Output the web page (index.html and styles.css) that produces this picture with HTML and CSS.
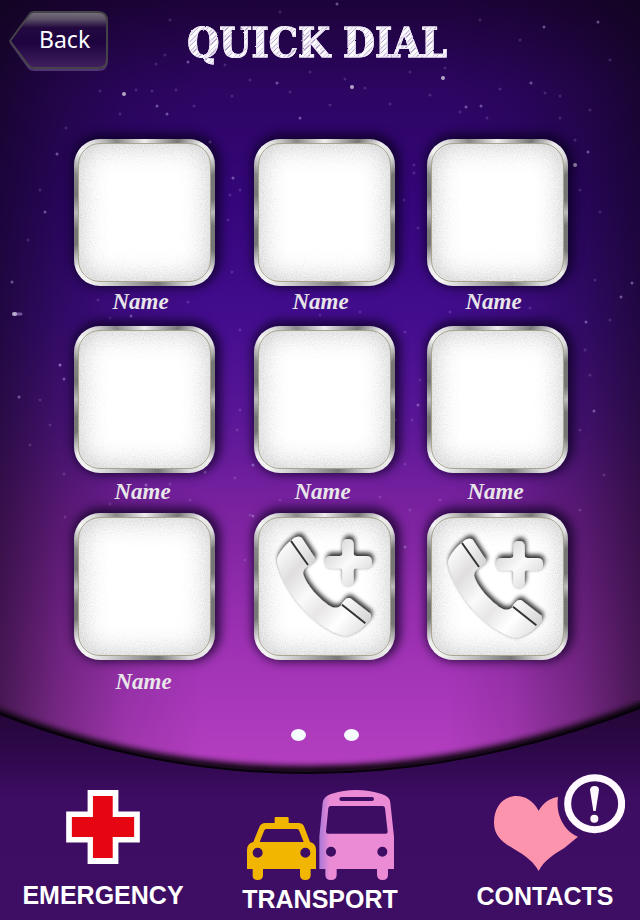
FILE: index.html
```html
<!DOCTYPE html>
<html lang="en">
<head>
<meta charset="utf-8">
<meta name="viewport" content="width=device-width, initial-scale=1">
<title>Quick Dial</title>
<link rel="stylesheet" href="styles.css">
</head>
<body>
<svg class="defs" aria-hidden="true">
  <defs>
    <filter id="grain" x="0" y="0" width="100%" height="100%">
      <feTurbulence type="fractalNoise" baseFrequency="0.9" numOctaves="2" seed="4" result="n"/>
      <feDisplacementMap in="SourceGraphic" in2="n" scale="26" xChannelSelector="R" yChannelSelector="G"/>
    </filter>
    <filter id="chalk">
      <feTurbulence type="fractalNoise" baseFrequency="0.5" numOctaves="2" seed="8" result="n"/>
      <feDisplacementMap in="SourceGraphic" in2="n" scale="2" xChannelSelector="R" yChannelSelector="G"/>
    </filter>
    <filter id="raise" x="-30%" y="-30%" width="160%" height="160%">
      <feDropShadow dx="4" dy="-10" stdDeviation="7" flood-color="#000" flood-opacity=".75"/>
      <feDropShadow dx="0" dy="2" stdDeviation="3" flood-color="#000" flood-opacity=".25"/>
    </filter>
    <filter id="soft" x="-10%" y="-50%" width="120%" height="200%"><feGaussianBlur stdDeviation="3"/></filter>
    <radialGradient id="halo"><stop offset=".5" stop-color="#fff"/><stop offset="1" stop-color="#fff" stop-opacity="0"/></radialGradient>
    <linearGradient id="steel" gradientUnits="userSpaceOnUse" x1="110" y1="150" x2="390" y2="400">
      <stop offset="0" stop-color="#fff"/><stop offset=".22" stop-color="#e0dede"/><stop offset=".42" stop-color="#fafafa"/>
      <stop offset=".58" stop-color="#e8e6e6"/><stop offset=".75" stop-color="#fff"/><stop offset="1" stop-color="#dcdada"/>
    </linearGradient>
    <linearGradient id="cap" x1="0" y1="0" x2="1" y2="1"><stop offset="0" stop-color="#fff"/><stop offset="1" stop-color="#d2d0d2"/></linearGradient>
    <linearGradient id="plus" x1="0" y1="0" x2="1" y2="1"><stop offset=".2" stop-color="#dedcdd"/><stop offset=".5" stop-color="#fbfbfb"/><stop offset=".8" stop-color="#e2e0e1"/></linearGradient>
    <g id="phone-add">
      <ellipse cx="265" cy="250" rx="130" ry="130" fill="url(#halo)"/>
      <g filter="url(#raise)">
        <path fill="url(#steel)" d="M154 121C134 137 112 164 111 183C125 250 175 320 230 364C262 389 298 408 320 407C345 400 365 386 378 371L305 315C298 322 288 326 277 322C240 303 195 250 189 220C190 209 196 203 205 196Z"/>
        <path fill="url(#cap)" d="M155 121C163 110 178 107 185 113L225 174C226 184 214 191 204 197Z"/>
        <path fill="url(#cap)" d="M304 315C312 300 322 291 331 295L391 341C397 350 389 363 377 371Z"/>
      </g>
      <path d="M153 123L204 195M306 314L376 370" stroke="#333" stroke-width="6"/>
      <path filter="url(#raise)" fill="url(#plus)" d="M324 117Q341 117 341 134V161Q341 168 348 168H379Q396 168 396 186T379 205H348Q341 205 341 212V240Q341 257 324 257T307 240V212Q307 205 300 205H273Q256 205 256 186T273 168H300Q307 168 307 161V134Q307 117 324 117Z"/>
    </g>
  </defs>
</svg>
<div class="screen">
  <svg class="stars" viewBox="0 0 640 720" preserveAspectRatio="none" aria-hidden="true">
    <path class="faint" d="M100 91h0M120 114h0M136 90h0M152 91h0M176 90h0M156 64h0M194 106h0M232 96h0M225 65h0M250 80h0M290 92h0M310 72h0M330 105h0M345 79h0M365 88h0M390 104h0M410 72h0M430 95h0M445 68h0M460 112h0M487 118h0M500 89h0M545 93h0M560 118h0M590 110h0M66 128h0M40 190h0M28 240h0M230 195h0M228 220h0M240 190h0M414 165h0M414 173h0M404 200h0M418 228h0M580 190h0M600 212h0M232 272h0M98 300h0M110 318h0M188 302h0M240 330h0M405 332h0M412 420h0M420 380h0M595 280h0M610 320h0M585 350h0M60 365h0M50 425h0M30 445h0M64 474h0M65 517h0M110 504h0M170 484h0M190 500h0M240 410h0M235 478h0M250 515h0M405 464h0M410 510h0M440 500h0M590 375h0M580 430h0M604 475h0M580 510h0M40 400h0M237 430h0M395 560h0M245 560h0M320 315h0M360 312h0M450 312h0M530 308h0M380 497h0M280 500h0M195 37h0M280 12h0M480 20h0M520 40h0M170 20h0M410 35h0M610 60h0M575 140h0M560 96h0M165 55h0"/>
    <path class="mid" d="M188 62h0M167 114h0M157 106h0M277 83h0M300 118h0M466 107h0M481 106h0M531 83h0M210 142h0M57 154h0M233 178h0M45 212h0M12 282h0M131 316h0M60 365h0M64 379h0M19 397h0M418 405h0M594 411h0M586 322h0M621 297h0M588 152h0M632 283h0M205 472h0M146 485h0M253 516h0M405 547h0M337 4h0M598 22h0M544 27h0M395 420h0M253 465h0"/>
    <path class="bright" d="M124 94h0M352 87h0M443 78h0M575 165h0M14 314h1"/>
    <path class="mid" d="M15 314h6"/>
  </svg>
  <header class="top">
    <a class="back" href="#">
      <svg viewBox="0 0 100 61" aria-hidden="true">
        <defs><linearGradient id="gloss" x1="0" y1="0" x2="0" y2="1">
          <stop offset="0" stop-color="#77717f"/><stop offset=".12" stop-color="#5d5468"/><stop offset=".28" stop-color="#240940"/>
          <stop offset=".55" stop-color="#1d0340"/><stop offset="1" stop-color="#41205f"/></linearGradient></defs>
        <path d="M25 3H89Q98 3 98 12V50Q98 59 89 59H25Q22 59 20 57L2 32Z" fill="none" stroke="#503572" stroke-width="2"/>
        <path d="M25 1H89Q98 1 98 10V48Q98 57 89 57H25Q22 57 20 55L1 30L20 4Q22 1 25 1Z" fill="url(#gloss)" stroke="#454347" stroke-width="2"/>
      </svg>
      <span>Back</span>
    </a>
    <h1>QUICK DIAL</h1>
  </header>
  <main>
    <div class="row">
      <button class="dial"><span class="tile"></span><span class="name">Name</span></button>
      <button class="dial"><span class="tile"></span><span class="name">Name</span></button>
      <button class="dial"><span class="tile"></span><span class="name">Name</span></button>
    </div>
    <div class="row second">
      <button class="dial"><span class="tile"></span><span class="name">Name</span></button>
      <button class="dial"><span class="tile"></span><span class="name">Name</span></button>
      <button class="dial"><span class="tile"></span><span class="name">Name</span></button>
    </div>
    <div class="row third">
      <button class="dial"><span class="tile"></span><span class="name">Name</span></button>
      <button class="dial" aria-label="Add number"><span class="tile"><svg viewBox="42 39 423 441"><use href="#phone-add"/></svg></span></button>
      <button class="dial" aria-label="Add number"><span class="tile"><svg viewBox="48 33 423 441"><use href="#phone-add"/></svg></span></button>
    </div>
    <div class="pager">
      <button aria-label="Page 1"></button>
      <button aria-label="Page 2"></button>
    </div>
  </main>
  <nav>
    <svg class="bowl" viewBox="0 0 640 220" preserveAspectRatio="none" aria-hidden="true">
      <defs><linearGradient id="base" x1="0" y1="0" x2="0" y2="1">
        <stop offset="0" stop-color="#240636"/><stop offset=".2" stop-color="#2d084a"/><stop offset=".42" stop-color="#3d0c63"/><stop offset="1" stop-color="#3e0d64"/></linearGradient></defs>
      <path d="M-20 7Q310 138 660 0" fill="none" stroke="#000" stroke-width="9" filter="url(#soft)"/>
      <path d="M0 15Q310 136 640 9V220H0Z" fill="url(#base)"/>
      <path d="M0 14Q310 135 640 8" fill="none" stroke="#07010c" stroke-width="2"/>
    </svg>
    <a class="emergency" href="#">
      <svg viewBox="190 300 220 221" aria-hidden="true">
        <path fill="#fff" d="M254 300H346V364H410V457H346V521H254V457H190V364H254Z"/>
        <path fill="#e60612" d="M270 318H329V381H393V440H329V503H270V440H207V381H270Z"/>
      </svg>
      <span>EMERGENCY</span>
    </a>
    <a class="transport" href="#">
      <svg viewBox="18 30 441 270" aria-hidden="true">
        <defs><linearGradient id="bus" x1="0" y1="0" x2="1" y2="0"><stop offset="0" stop-color="#a878d8"/><stop offset=".14" stop-color="#eb8bd5"/></linearGradient></defs>
        <path fill="#f2b500" fill-rule="evenodd" d="M101 129V115Q101 111 105 111H139Q143 111 143 115V129H172Q184 129 189 139L207 186Q225 190 225 210V267H209V286Q209 300 193 300T177 286V267H66V286Q66 300 50 300T35 286V267H18V210Q18 190 37 186L55 141Q60 129 73 129ZM77 147Q72 147 70 151L56 186H188L174 151Q172 147 167 147ZM50 203A15 15 0 1 0 50 233A15 15 0 1 0 50 203ZM193 203A15 15 0 1 0 193 233A15 15 0 1 0 193 203Z"/>
        <path fill="url(#bus)" fill-rule="evenodd" d="M235 267V170L245 68Q247 50 270 42Q345 18 422 42Q447 50 448 68L459 170V267H441V284Q441 300 425 300T408 284V267H287V284Q287 300 270 300T253 284V267ZM301 51Q295 51 295 57T301 63H393Q399 63 399 57T393 51ZM269 78Q263 78 262 84L255 155Q255 161 261 161H434Q440 161 440 155L432 84Q431 78 425 78ZM270 200A15 15 0 1 0 270 230A15 15 0 1 0 270 200ZM424 200A15 15 0 1 0 424 230A15 15 0 1 0 424 200Z"/>
      </svg>
      <span>TRANSPORT</span>
    </a>
    <a class="contacts" href="#">
      <svg viewBox="435 252 480 291" aria-hidden="true">
        <path fill="#fc94ad" d="M656 362C640 333 616 318 590 318C548 318 522 352 522 398C522 438 550 459 582 477C620 498 643 519 656 543C672 512 702 493 732 475L774 440C734 424 706 376 714 321C690 323 669 340 656 362Z"/>
        <ellipse cx="824" cy="341" rx="81" ry="78" fill="none" stroke="#fff9ff" stroke-width="21"/>
        <path fill="#fff9ff" d="M810 300Q811 288 824 288T837 300L827 363H820Z"/><circle cx="823" cy="386" r="12" fill="#fff9ff"/>
      </svg>
      <span>CONTACTS</span>
    </a>
  </nav>
</div>
</body>
</html>
```
FILE: styles.css
```css
* { box-sizing: border-box; }
body { margin: 0; background: #3e0d64; }
button { padding: 0; border: 0; background: none; color: inherit; cursor: pointer; }
a { color: #fff; text-decoration: none; }
.defs { position: absolute; width: 0; height: 0; }

.screen {
  position: relative;
  display: flex;
  flex-direction: column;
  min-height: 100vh;
  overflow: hidden;
  background:
    linear-gradient(90deg, rgba(12,4,20,.62), rgba(12,4,20,.34) 9%, rgba(12,4,20,.1) 20%, transparent 32%, transparent 70%, rgba(12,4,20,.1) 80%, rgba(12,4,20,.34) 91%, rgba(12,4,20,.62)),
    linear-gradient(#1c0338, #2d0562 90px, #34067a 200px, #430d8e 320px, #5a1797 420px, #7a229f 510px, #9d31b3 640px, #b43ec0 765px);
}
.stars { position: absolute; top: 0; left: 0; width: 100%; height: 720px; fill: none; stroke: #c9b0f5; stroke-linecap: round; }
.faint { stroke-width: 3; opacity: .2; }
.mid { stroke-width: 3; opacity: .45; }
.bright { stroke: #fff; stroke-width: 4; opacity: .65; }

.top { position: relative; display: flex; justify-content: center; height: 72px; }
.back { position: absolute; left: 9px; top: 11px; width: 100px; height: 61px; }
.back svg { display: block; width: 100%; }
.back span { position: absolute; left: 30px; top: 12px; font: 23px/32px "Noto Sans", sans-serif; }
h1 {
  margin: 0;
  padding-right: 6px;
  font: bold 41px/86px "DejaVu Serif Condensed", "DejaVu Serif", serif;
  white-space: nowrap;
  height: 86px;
  color: transparent;
  -webkit-text-stroke: 1px #eee8f5;
  background: repeating-linear-gradient(135deg, #fff 0 3px, #d5cbe3 3px 4px, #f5f1fa 4px 6px, #b9aacd 6px 7px);
  background-clip: text;
  -webkit-background-clip: text;
  filter: url(#chalk);
}

main { position: relative; padding: 67px 72px 0 74px; height: 702px; }
.row { display: grid; grid-template-columns: 180fr 173fr 141fr; height: 187px; }
.dial { width: 141px; height: 187px; display: flex; flex-direction: column; align-items: stretch; }
.tile {
  position: relative;
  flex: none;
  height: 147px;
  border-radius: 26px;
  background: conic-gradient(#eee, #999 5%, #777 7%, #eee 11%, #ddd 14%, #777 17%, #777 22%, #bbb 25%, #777 28%, #777 33%, #eee 37%, #ddd 41%, #777 47%, #bbb 55%, #f4f4f4 61%, #eee 64%, #777 68%, #777 71%, #bbb 75%, #777 79%, #888 83%, #f4f4f4 87%, #ddd 90%, #888 94%, #eee);
  box-shadow: 2px -2px 10px 4px rgba(10,0,30,.7);
}
.tile::before {
  content: "";
  position: absolute;
  inset: -15px;
  clip-path: inset(20px round 22px);
  background: #fff;
  box-shadow: inset 0 0 28px 20px #c6c6c6;
  border-radius: 40px;
  filter: url(#grain);
}
.tile::after { content: ""; position: absolute; inset: 4px; border: 1px solid #a8a490; border-radius: 22px; }
.tile svg { position: absolute; top: 0; left: 0; width: 100%; height: 100%; }
.name {
  padding: 4px 8px 0 0;
  font: italic bold 23px/24px "Liberation Serif", serif;
  color: #e9e6ea;
  text-align: center;
}
.second .name { padding: 7px 4px 0 0; }
.third .name { padding: 10px 2px 0 0; }
.pager { display: flex; justify-content: center; gap: 38px; padding: 29px 0 0 8px; }
.pager button { width: 15px; height: 12px; border-radius: 50%; background: #f5fdff; }

nav {
  position: relative;
  flex: 1;
  display: grid;
  grid-template-columns: 174fr 260fr 190fr;
  padding-left: 16px;
  min-height: 146px;
}
.bowl { position: absolute; left: 0; bottom: 0; width: 100%; height: 220px; }
nav a {
  position: relative;
  display: flex;
  flex-direction: column;
  align-items: center;
  font: bold 25px/28px "Liberation Sans", Arial, sans-serif;
}
.emergency { padding-top: 16px; gap: 17px; }
.emergency svg { width: 74px; height: 74px; }
.transport { padding-top: 16px; gap: 5px; }
.transport svg { width: 147px; height: 90px; }
.contacts { gap: 11px; }
.contacts svg { width: 160px; height: 97px; }
```
